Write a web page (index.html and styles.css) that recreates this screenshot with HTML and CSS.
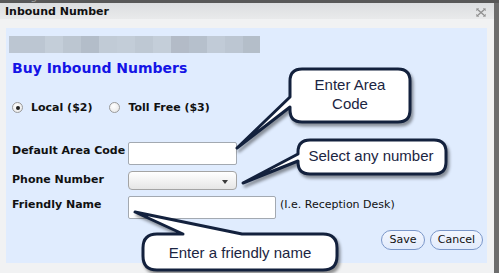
FILE: index.html
```html
<!DOCTYPE html>
<html>
<head>
<meta charset="utf-8">
<link rel="stylesheet" href="styles.css">
</head>
<body>
<div class="window">
  <div class="topstrip"><span>Configure Inbound Numbers</span></div>
  <div class="frame">
    <div class="main">
      <div class="titlebar">
        <span class="title">Inbound Number</span>
        <svg class="close" width="10" height="9" viewBox="0 0 10 9">
          <path d="M1 1 L9 8 M9 1 L1 8" stroke="#8f8f8f" stroke-width="1.3" fill="none"/>
          <path d="M0.5 0.5 H3 M0.5 0.5 V3 M9.5 0.5 H7 M9.5 0.5 V3 M0.5 8.5 H3 M0.5 8.5 V6 M9.5 8.5 H7 M9.5 8.5 V6" stroke="#b0b0b0" stroke-width="1" fill="none"/>
        </svg>
      </div>
      <div class="body">
        <div class="panel">
          <div class="blur"></div>
          <h1 class="heading">Buy Inbound Numbers</h1>
          <div class="radios">
            <span class="radio checked"></span><span class="rlabel">Local ($2)</span>
            <span class="radio"></span><span class="rlabel">Toll Free ($3)</span>
          </div>
          <div class="form">
            <div class="label">Default Area Code</div>
            <div class="field"><div class="input short"></div></div>
            <div class="label">Phone Number</div>
            <div class="field"><div class="select"><span class="arrow"></span></div></div>
            <div class="label">Friendly Name</div>
            <div class="field"><div class="input long"></div><span class="hint">(I.e. Reception Desk)</span></div>
          </div>
          <div class="buttons">
            <span class="btn save">Save</span>
            <span class="btn cancel">Cancel</span>
          </div>
        </div>
      </div>
    </div>
    <div class="rightframe"></div>
  </div>
  <svg class="callouts" width="499" height="273" viewBox="0 0 499 273">
    <g class="bubble">
      <path d="M302 69 H398 Q410 69 410 81 V110 Q410 122 398 122 H302 Q290 122 290 110 V107 L237 148 L290 97 V81 Q290 69 302 69 Z"/>
      <path d="M310 140 H434 Q446 140 446 152 V162 Q446 174 434 174 H310 Q298 174 298 162 V161 L243 183 L298 154 V152 Q298 140 310 140 Z"/>
      <path d="M157 234 H183 L135 212 L242 234 H323 Q337 234 337 248 V256 Q337 270 323 270 H157 Q143 270 143 256 V248 Q143 234 157 234 Z"/>
    </g>
    <text class="ctext" x="350" y="90">Enter Area</text>
    <text class="ctext" x="350" y="109">Code</text>
    <text class="ctext" x="371" y="161">Select any number</text>
    <text class="ctext" x="240" y="258">Enter a friendly name</text>
  </svg>
</div>
</body>
</html>
```
FILE: styles.css
```css
html, body {
  margin: 0;
  padding: 0;
}
body {
  width: 499px;
  height: 273px;
  overflow: hidden;
  font-family: "DejaVu Sans", Verdana, sans-serif;
  background: #e5e5e5;
}
.window {
  position: relative;
  width: 499px;
  height: 273px;
  display: flex;
  flex-direction: column;
}
.topstrip {
  height: 3px;
  background: #585858;
  overflow: hidden;
  position: relative;
}
.topstrip span {
  display: block;
  margin-top: -9px;
  padding-left: 2px;
  font-size: 11px;
  line-height: 12px;
  color: #9a9a9a;
  white-space: nowrap;
}
.frame {
  flex: 1;
  display: flex;
}
.main {
  flex: 1;
  display: flex;
  flex-direction: column;
}
.rightframe {
  width: 5px;
  background: #6d6d6d;
}
.titlebar {
  height: 16px;
  background: linear-gradient(#dcdee0, #e9eaeb);
  display: flex;
  align-items: center;
  justify-content: space-between;
  padding: 0 8px 0 5px;
}
.title {
  font-size: 11px;
  font-weight: bold;
  color: #111;
  line-height: 14px;
  margin-top: 2px;
}
.close {
  display: block;
  margin-top: 2px;
}
.body {
  flex: 1;
  background: #f1f2f3;
  padding: 9px 7px 0 6px;
  display: flex;
  flex-direction: column;
}
.panel {
  height: 235px;
  background: #e0ecfe;
  display: flex;
  flex-direction: column;
}
.blur {
  margin: 8px 0 0 3px;
  width: 251px;
  height: 17px;
  background: linear-gradient(90deg,
    #bcc6d2 0 36px, #c4ced9 36px 54px, #bcc6d1 54px 72px, #b3bdc9 72px 90px,
    #c1cbd6 90px 108px, #c3cdd8 108px 126px, #bec8d3 126px 144px, #c4ced9 144px 162px,
    #b3bbc7 162px 180px, #b6c0cc 180px 198px, #c1cbd7 198px 216px, #bcc6d2 216px 234px,
    #b4bec9 234px 251px);
}
.heading {
  margin: 6px 0 0 6px;
  font-size: 14px;
  line-height: 18px;
  font-weight: bold;
  color: #1414e6;
}
.radios {
  margin: 22px 0 0 6px;
  display: flex;
  align-items: center;
  height: 16px;
  font-size: 11px;
  font-weight: bold;
  color: #111;
}
.radio {
  width: 11px;
  height: 11px;
  border-radius: 50%;
  border: 1px solid #9a9a9a;
  background: radial-gradient(circle at 40% 35%, #ffffff, #e4e4e4);
  box-sizing: border-box;
  position: relative;
  flex: none;
}
.radio.checked::after {
  content: "";
  position: absolute;
  left: 3px;
  top: 3px;
  width: 4px;
  height: 4px;
  border-radius: 50%;
  background: #222;
}
.rlabel {
  margin-left: 8px;
  margin-right: 17px;
}
.form {
  margin: 27px 0 0 6px;
  display: grid;
  grid-template-columns: 116px auto;
  grid-template-rows: 23px 19px 23px;
  row-gap: 6px;
}
.label {
  font-size: 11px;
  font-weight: bold;
  line-height: 14px;
  padding-top: 2px;
  color: #111;
}
.field {
  display: flex;
  align-items: flex-start;
}
.input {
  height: 23px;
  box-sizing: border-box;
  border: 1px solid #a3a9b1;
  border-radius: 2px;
  background: #fff;
}
.input.short { width: 109px; }
.input.long { width: 148px; }
.select {
  width: 109px;
  height: 19px;
  box-sizing: border-box;
  border: 1px solid #a4a4a4;
  border-radius: 4px;
  background: linear-gradient(#ffffff, #e6e6e6);
  position: relative;
}
.arrow {
  position: absolute;
  right: 8px;
  top: 8px;
  width: 0;
  height: 0;
  border-left: 3.5px solid transparent;
  border-right: 3.5px solid transparent;
  border-top: 4px solid #3a3a3a;
}
.hint {
  font-size: 11px;
  line-height: 14px;
  padding-top: 2px;
  margin-left: 4px;
  color: #111;
}
.buttons {
  margin: 11px 4px 0 0;
  display: flex;
  justify-content: flex-end;
  gap: 5px;
}
.btn {
  height: 20px;
  box-sizing: border-box;
  border: 1.5px solid #7b97c9;
  border-radius: 10px;
  background: linear-gradient(#f2f6fe, #e2ebfc);
  font-size: 11px;
  line-height: 17px;
  color: #111;
  text-align: center;
}
.save { width: 44px; }
.cancel { width: 53px; }
.callouts {
  position: absolute;
  left: 0;
  top: 0;
  pointer-events: none;
}
.bubble path {
  fill: #ffffff;
  stroke: #13213d;
  stroke-width: 3;
  stroke-linejoin: round;
  filter: drop-shadow(2px 3px 1.5px rgba(0, 0, 0, 0.4));
}
.ctext {
  font-family: "Liberation Sans", Arial, sans-serif;
  font-size: 15px;
  fill: #1b2542;
  text-anchor: middle;
}
```
